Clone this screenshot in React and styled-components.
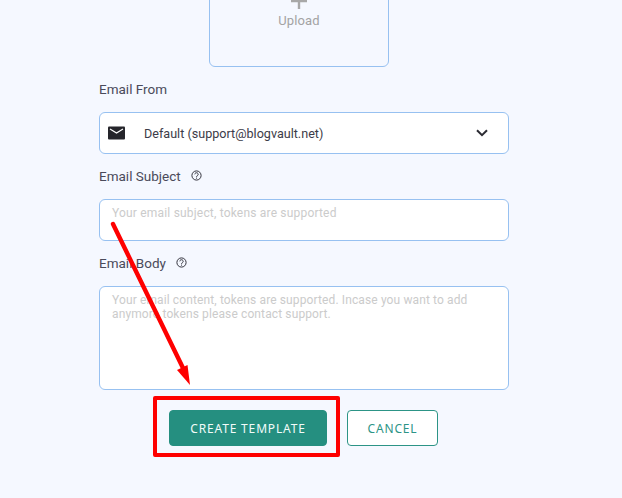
import React from "react";
import styled, { createGlobalStyle } from "styled-components";

const Global = createGlobalStyle`
  html, body { margin: 0; padding: 0; background: #f5f8ff; }
  body { font-family: Roboto, "Liberation Sans", sans-serif; overflow: hidden; }
`;

const Page = styled.div`
  position: relative;
  width: 622px;
  height: 498px;
  overflow: hidden;
  background: #f5f8ff;
`;

const Form = styled.form`
  display: flex;
  flex-direction: column;
  width: 410px;
  margin: -114px 0 0 99px;
`;

const UploadBox = styled.div`
  box-sizing: border-box;
  align-self: flex-start;
  width: 180px;
  height: 181px;
  padding-top: 106px;
  margin: 0 0 12px 110px;
  display: flex;
  flex-direction: column;
  align-items: center;
  border: 1px solid #97c1f1;
  border-radius: 6px;
  color: #a3a3a3;
`;

const UploadLabel = styled.span`
  font-size: 13px;
  line-height: 16px;
  margin-top: 4px;
  letter-spacing: 0.1px;
`;

const Label = styled.div`
  display: flex;
  align-items: center;
  gap: 10px;
  height: 20px;
  font-size: 13.5px;
  line-height: 20px;
  color: #4a4a5a;
  margin-bottom: ${(p) => p.$gap}px;

  svg {
    margin-top: -2px;
  }
`;

const SelectBox = styled.div`
  box-sizing: border-box;
  display: flex;
  align-items: center;
  height: 42px;
  padding: 0 20px 0 8px;
  margin-bottom: 12px;
  background: #fff;
  border: 1px solid #97c1f1;
  border-radius: 6px;
`;

const SelectText = styled.span`
  flex: 1;
  margin-left: 18px;
  font-size: 12.6px;
  color: #3c3c48;
`;

const Field = styled.div`
  box-sizing: border-box;
  height: ${(p) => p.$height}px;
  padding: 6px 12px;
  margin-bottom: ${(p) => p.$gap}px;
  background: #fff;
  border: 1px solid #97c1f1;
  border-radius: 6px;
  font-size: 12px;
  line-height: 14px;
  letter-spacing: ${(p) => p.$spacing}px;
  color: #cbcbcb;
`;

const Actions = styled.div`
  display: flex;
  gap: 20px;
  margin-left: 70px;
`;

const Button = styled.button`
  box-sizing: border-box;
  width: ${(p) => p.$width}px;
  height: 36px;
  padding: 0;
  border-radius: 4px;
  font-family: "Noto Sans", "Open Sans", sans-serif;
  font-size: 12px;
  letter-spacing: 0.84px;
  border: 1px solid ${(p) => (p.$primary ? "#258f80" : "#2c9486")};
  background: ${(p) => (p.$primary ? "#258f80" : "#fff")};
  color: ${(p) => (p.$primary ? "#f2fbf9" : "#2c9486")};
`;

const Highlight = styled.div`
  position: absolute;
  left: 153px;
  top: 396px;
  width: 187px;
  height: 61px;
  box-sizing: border-box;
  border: 4px solid #fe0000;
  border-radius: 2px;
`;

const Arrow = styled.svg`
  position: absolute;
  left: 0;
  top: 0;
  pointer-events: none;
`;

const MailIcon = () => (
  <svg width="18" height="14" viewBox="0 0 18 14">
    <rect width="17" height="13" y="0.5" rx="1" fill="#25252b" />
    <path d="M2 3l6.5 4L15 3" fill="none" stroke="#fff" strokeWidth="1.2" />
  </svg>
);

const Chevron = () => (
  <svg width="12" height="8" viewBox="0 0 12 8">
    <path d="M1 1.2l5 5 5-5" fill="none" stroke="#2b2b33" strokeWidth="2" />
  </svg>
);

const HelpIcon = () => (
  <svg width="11" height="11" viewBox="0 0 11 11">
    <circle cx="5.5" cy="5.5" r="4.6" fill="none" stroke="#33333d" strokeWidth="1" />
    <path d="M3.8 4.3a1.7 1.6 0 1 1 2.6 1.4c-.6.4-.9.6-.9 1.2" fill="none" stroke="#33333d" strokeWidth="1" />
    <rect x="5" y="7.6" width="1" height="1" fill="#33333d" />
  </svg>
);

const PlusIcon = () => (
  <svg width="16" height="16" viewBox="0 0 16 16">
    <path d="M8 0v16M0 8h16" stroke="#a8a8a8" strokeWidth="2.4" />
  </svg>
);

export default function App() {
  return (
    <Page>
      <Global />
      <Form>
        <UploadBox>
          <PlusIcon />
          <UploadLabel>Upload</UploadLabel>
        </UploadBox>
        <Label $gap={13}>Email From</Label>
        <SelectBox>
          <MailIcon />
          <SelectText>Default (support@blogvault.net)</SelectText>
          <Chevron />
        </SelectBox>
        <Label $gap={13}>
          Email Subject <HelpIcon />
        </Label>
        <Field $height={42} $gap={12} $spacing={0.19}>Your email subject, tokens are supported</Field>
        <Label $gap={13}>
          Email Body <HelpIcon />
        </Label>
        <Field $height={104} $gap={20} $spacing={0.12}>
          Your email content, tokens are supported. Incase you want to add anymore tokens please contact support.
        </Field>
        <Actions>
          <Button type="button" $primary $width={158}>CREATE TEMPLATE</Button>
          <Button type="button" $width={91}>CANCEL</Button>
        </Actions>
      </Form>
      <Highlight />
      <Arrow width="622" height="498" viewBox="0 0 622 498">
        <path d="M113 224L183 368" stroke="#fe0000" strokeWidth="4.4" strokeLinecap="round" />
        <path d="M190 385L177 370L187.5 365Z" fill="#fe0000" />
      </Arrow>
    </Page>
  );
}
